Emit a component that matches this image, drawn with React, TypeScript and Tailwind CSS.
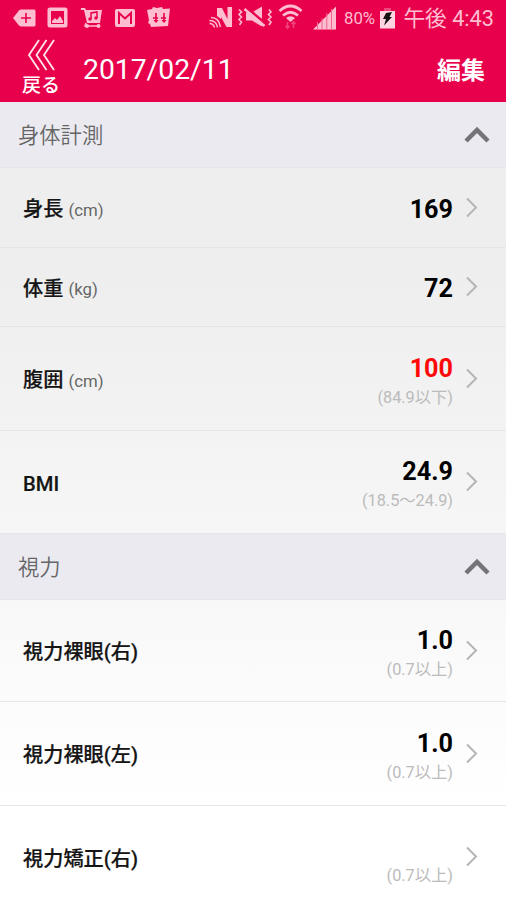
import React, { useState } from "react";

type Item = {
  label: string;
  unit?: string;
  value?: string;
  range?: string;
  alert?: boolean;
  height: string;
};

const bodyItems: Item[] = [
  { label: "身長", unit: "(cm)", value: "169", height: "h-20" },
  { label: "体重", unit: "(kg)", value: "72", height: "h-[79px]" },
  { label: "腹囲", unit: "(cm)", value: "100", range: "(84.9以下)", alert: true, height: "h-[104px]" },
  { label: "BMI", value: "24.9", range: "(18.5〜24.9)", height: "h-[103px]" },
];

const visionItems: Item[] = [
  { label: "視力裸眼(右)", value: "1.0", range: "(0.7以上)", height: "h-[102px]" },
  { label: "視力裸眼(左)", value: "1.0", range: "(0.7以上)", height: "h-[104px]" },
  { label: "視力矯正(右)", value: "", range: "(0.7以上)", height: "h-[103px]" },
];

function NotificationIcons() {
  return (
    <svg width="162" height="28" viewBox="0 0 162 28" fill="#ffbdd0">
      {/* tag with plus */}
      <path d="M1 18 7 10.500Q8 9.500 9 9.500H22Q23.500 9.500 23.500 11V25Q23.500 26.500 22 26.500H9Q8 26.500 7 25.500Z" />
      <path d="M14 13v10M9 18h10" stroke="#e8004c" strokeWidth="1.600" />
      {/* picture */}
      <path
        fillRule="evenodd"
        d="M38 7.500H53Q55.500 7.500 55.500 10V25Q55.500 27.500 53 27.500H38Q35.500 27.500 35.500 25V10Q35.500 7.500 38 7.500ZM39 11V24H52V11Z"
      />
      <path d="m40 23 0-2 3-3 2 2 3-4 3 5v2Z" />
      {/* music cart */}
      <path d="M69 8h4l1 2h16l-2 13H75L72 10h-3Z" />
      <path d="M74 23 73 26h15" stroke="#ffbdd0" strokeWidth="1.500" fill="none" />
      <circle cx="75" cy="26" r="2" />
      <circle cx="86.500" cy="26" r="2" />
      <path d="M79 19v-6l6-1v6" stroke="#e8004c" strokeWidth="1.500" fill="none" />
      <circle cx="78" cy="19" r="1.700" fill="#e8004c" />
      <circle cx="84" cy="18" r="1.700" fill="#e8004c" />
      {/* mail */}
      <rect x="103" y="9" width="20" height="18" rx="2" />
      <path d="M107 24V13l6 5.500 6-5.500v11" stroke="#e8004c" strokeWidth="2" fill="none" />
      {/* cards */}
      <path d="m135 10 5-1 1-2 4 1 5-1 1 2 7-.5-2 17.500-17 1-1-3-2-1 1-3Z" />
      <path d="M144 13v9M152 13v9M141 18h5M149 18h5" stroke="#e8004c" strokeWidth="1.600" />
      <path d="m141.500 20 2.500 3 2.500-3ZM149.500 20l2.500 3 2.500-3Z" fill="#e8004c" />
    </svg>
  );
}

function SignalIcons() {
  return (
    <svg width="130" height="32" viewBox="208 0 130 32" fill="none" stroke="#ffbdd0">
      {/* nfc */}
      <path d="M217 16V8h5l5.500 11V7h4.500v20h-5.500L221 17v2Z" fill="#ffbdd0" stroke="none" />
      <path d="M209.500 23.500q4 0 5 4M209.500 20.500q7 0 8 7M211 17.500q8 0 9.500 9.500" strokeWidth="1.500" />
      {/* vibrate and mute */}
      <path
        d="m239 9.500 2.500 2.500-2.500 2.500 2.500 2.500-2.500 2.500 2.500 2.500-2 3M269 9.500l2 2.500-2.500 2.500 2.500 2.500-2.500 2.500 2.500 2.500-2 3"
        strokeWidth="1.600"
      />
      <path d="M246 12.500h6l10-6v20l-10-6h-6Z" fill="#ffbdd0" stroke="none" />
      <path d="m246 7 20 17" stroke="#e8004c" strokeWidth="2.500" />
      <path d="m244.500 9 20 17" strokeWidth="2.500" />
      {/* wifi */}
      <path d="M279.500 11Q290.500 1 301.500 11M283 15.500Q290.500 9 298 15.500" strokeWidth="2.700" />
      <path d="M286 18Q290.500 14.500 295 18L290.500 22Z" fill="#ffbdd0" stroke="none" />
      <path d="M287.500 22v6m-2-2 2 2 2-2M293.500 28v-6m-2 2 2-2 2 2" stroke="#f0447c" strokeWidth="1.600" />
      {/* antenna */}
      <path d="M313 29.500 336 6.500v23Z" fill="#ffbdd0" stroke="none" />
      <path d="M317.500 22v8M322 18v12M326.800 13v17M331.500 9v21" stroke="#f0648f" strokeWidth="1" />
    </svg>
  );
}

function Battery() {
  return (
    <svg width="17" height="24" viewBox="0 0 17 24">
      <path d="M5 2h7v4H5Z" fill="#f0447c" />
      <rect x="1" y="5" width="15" height="17.500" fill="#ffd5e1" />
      <path d="m7 7 6-1-2.500 5H13L5 19.500l2-6.500H4Z" fill="#111" />
    </svg>
  );
}

function SectionHeader({ title, open, onClick }: { title: string; open: boolean; onClick: () => void }) {
  return (
    <button
      onClick={onClick}
      className="flex h-[66px] w-full items-center justify-between border-b border-[#e5e5e9] bg-[#ebeaf1] pr-4 pl-[18px]"
    >
      <span className="pt-[3px] text-[21.3px] leading-8 font-[350] text-[#666]">{title}</span>
      <svg width="26" height="18" viewBox="0 0 26 18" className={open ? "" : "rotate-180"}>
        <path d="m2 15 11-11 11 11" fill="none" stroke="#747478" strokeWidth="4.500" />
      </svg>
    </button>
  );
}

function Row({ item }: { item: Item }) {
  return (
    <div
      className={`${item.height} flex shrink-0 items-center border-b border-[#e6e6e7] pr-[27px] pl-[23px]`}
    >
      <div className="flex flex-1 items-center gap-1.5 pt-[3px] text-[#151515]">
        <span className="text-[20.2px] leading-7 font-medium [-webkit-text-stroke:0.2px_#151515]">{item.label}</span>
        {item.unit && <span className="-ml-px pt-[3px] text-[16.8px] text-[#666]">{item.unit}</span>}
      </div>
      <div className="flex flex-col items-end pt-[3px]">
        {item.value !== undefined && (
          <span className={`h-[31px] text-[25.2px] leading-8 font-bold ${item.alert ? "text-[#ff0808]" : "text-black"}`}>
            {item.value}
          </span>
        )}
        {item.range && (
          <span className="h-6 text-[16.3px] leading-[27px] text-[#bbb]">{item.range}</span>
        )}
      </div>
      <svg width="14" height="22" viewBox="0 0 14 22" className="ml-3">
        <path d="m2 1.500 9 9-9 9" fill="none" stroke="#b5b5b5" strokeWidth="2" />
      </svg>
    </div>
  );
}

export default function App() {
  const [bodyOpen, setBodyOpen] = useState(true);
  const [visionOpen, setVisionOpen] = useState(true);

  return (
    <div className="h-[900px] w-full overflow-hidden bg-linear-to-b from-[#eeeeee] from-30% via-[#f5f5f5] via-55% to-white to-90% font-['Roboto','Noto_Sans_CJK_JP',sans-serif]">
      <header className="h-[102px] bg-[#e8004c] text-white">
        {/* Status bar */}
        <div className="flex h-[37px] items-start pr-3 pl-3 text-[#ffbdd0]">
          <NotificationIcons />
          <div className="ml-[34px] flex items-start">
            <SignalIcons />
            <span className="mt-1.5 ml-1.5 text-[16.8px] leading-6">80%</span>
            <span className="mt-1.5 ml-1">
              <Battery />
            </span>
          </div>
          <span className="ml-auto text-[21.7px] leading-[37px] whitespace-nowrap">午後 4:43</span>
        </div>

        {/* Title bar */}
        <div className="flex h-[65px] items-center pr-[21px] pl-[22px]">
          <button className="flex h-[65px] w-[38px] flex-col items-center">
            <svg width="30" height="34" viewBox="0 0 30 34" className="mt-px">
              <path
                d="M13 2 3 17l10 15M20.500 2l-10 15 10 15M28 2l-10 15 10 15"
                fill="none"
                stroke="#ffe6ed"
                strokeWidth="1.800"
              />
            </svg>
            <span className="mt-0.5 h-6 text-[19px] leading-6 font-medium whitespace-nowrap">戻る</span>
          </button>
          <h1 className="ml-[23px] flex-1 text-[28.3px] leading-9">2017/02/11</h1>
          <button className="pt-0.5 text-[24px] leading-9 font-bold">編集</button>
        </div>
      </header>

      <SectionHeader title="身体計測" open={bodyOpen} onClick={() => setBodyOpen(!bodyOpen)} />
      {bodyOpen && bodyItems.map((item) => <Row key={item.label} item={item} />)}

      <SectionHeader title="視力" open={visionOpen} onClick={() => setVisionOpen(!visionOpen)} />
      {visionOpen && visionItems.map((item) => <Row key={item.label} item={item} />)}
    </div>
  );
}
